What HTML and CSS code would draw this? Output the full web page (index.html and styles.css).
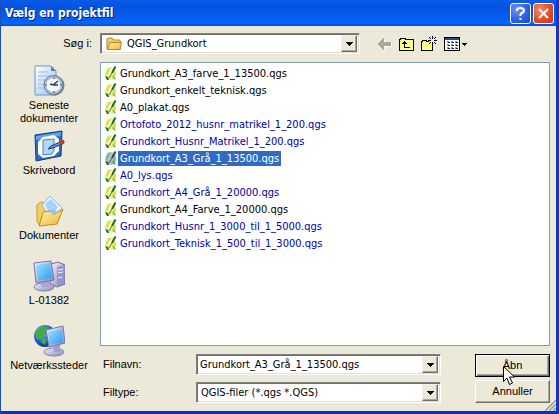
FILE: index.html
```html
<!DOCTYPE html>
<html lang="da">
<head>
<meta charset="utf-8">
<title>Vælg en projektfil</title>
<link rel="stylesheet" href="styles.css">
</head>
<body>
<svg class="defs" aria-hidden="true">
  <defs>
    <linearGradient id="paper" x1="0" y1="0" x2="1" y2="1"><stop offset="0" stop-color="#fff"/><stop offset="1" stop-color="#9cc0ee"/></linearGradient>
    <linearGradient id="screen" x1="0" y1="0" x2="1" y2="1"><stop offset="0" stop-color="#9fe4fd"/><stop offset="1" stop-color="#2a98f2"/></linearGradient>
    <linearGradient id="gold" x1="0" y1="0" x2="1" y2="1"><stop offset="0" stop-color="#fff3a6"/><stop offset="1" stop-color="#eeb83a"/></linearGradient>
    <linearGradient id="metal" x1="0" y1="0" x2="1" y2="1"><stop offset="0" stop-color="#f4f3fb"/><stop offset="1" stop-color="#8986b8"/></linearGradient>
    <radialGradient id="globe" cx=".35" cy=".3" r=".75"><stop offset="0" stop-color="#7cc4fa"/><stop offset=".6" stop-color="#1f5fc8"/><stop offset="1" stop-color="#0c2f82"/></radialGradient>
    <symbol id="qgs" viewBox="0 0 14 15">
      <path d="M3 2l3-1 5 1 1 4-1 6-3 2-5-1-2-5z" fill="#eef08c"/>
      <path d="M4 3l3-1-4 7-1-2zM11 5l1 3-1 4-3 1z" fill="#d3da4c"/>
      <path d="M6 4l3-1-3 5-2 1z" fill="#fbfbd8"/>
      <path d="M11.500 0.500L8 7" stroke="#1f6a34" stroke-width="2"/>
      <path d="M8 7l-3 5" stroke="#2e8a3c" stroke-width="1"/>
      <path d="M1 10l3 1 1 3-2 0z" fill="#1f6a34"/>
      <path d="M8 9l3 3 1 2-2-1z" fill="#7ca436"/>
    </symbol>
    <symbol id="down" viewBox="0 0 7 4"><path d="M0 0h7v1H6v1H5v1H4v1H3V3H2V2H1V1H0z"/></symbol>
  </defs>
</svg>

<main class="dialog">
  <header class="titlebar">
    <h1>Vælg en projektfil</h1>
    <button class="caption help" type="button" aria-label="Hjælp"><svg viewBox="0 0 19 19"><path d="M6 7V5.500Q6.500 4 9.500 4T13 6.500Q13 8 11 9T9.500 12M9.500 14v2" fill="none" stroke="#fff" stroke-width="2"/></svg></button>
    <button class="caption close" type="button" aria-label="Luk"><svg viewBox="0 0 19 19"><path d="M5 5l9 9M14 5l-9 9" fill="none" stroke="#fff" stroke-width="2"/></svg></button>
  </header>

  <form class="client">
    <label class="look-label" for="folder">Søg i:</label>
    <div class="lookbar">
      <div class="combo folder-combo">
        <svg class="folder" viewBox="0 0 16 14"><path d="M1 12V2.500Q1 1 2.500 1H6l1.500 2H13q1.500 0 1.500 1.500V12z" fill="#f3cf63" stroke="#b78a26"/><path d="M1.500 12.500L4 5.500h11.500L14 12.500z" fill="url(#gold)" stroke="#b8892a"/></svg>
        <select id="folder"><option>QGIS_Grundkort</option></select>
        <span class="drop" aria-hidden="true"><svg viewBox="0 0 7 4"><use href="#down"/></svg></span>
      </div>
      <div class="tools">
        <button type="button" aria-label="Tilbage" disabled><svg width="14" height="12" viewBox="0 0 14 12"><path d="M7 1v3h7v5H7v3L1 7z" fill="#fff"/><path d="M6 0v4h7v4H6v4H5v-1H4v-1H3V9H2V8H1V7H0V5h1V4h1V3h1V2h1V1h1V0z" fill="#aca899"/></svg></button>
        <button type="button" aria-label="Et niveau op"><svg width="15" height="14" viewBox="0 0 15 14" shape-rendering="crispEdges"><path d="M.5 13.500V2.500H1.500V1.500H6.500V2.500H14.500V13.500z" fill="#ffff83" stroke="#000"/><path d="M5 4h1v1h1v1h1v1H6v3h5v1H5V7H3V6h1V5h1z"/></svg></button>
        <button type="button" aria-label="Opret ny mappe"><svg width="16" height="16" viewBox="0 0 16 16" shape-rendering="crispEdges"><path d="M.5 14.500V5.500H1.500V4.500H5.500V5.500H11.500V14.500z" fill="#ffff83" stroke="#000"/><path d="M8 3h7v5H8z" fill="#ece9d8"/><path d="M11 0h1v3h-1zM11 6h1v3h-1zM7 4h3v1H7zM13 4h3v1h-3zM8 1h1v1H8zM9 2h1v1H9zM14 1h1v1h-1zM13 2h1v1h-1zM9 6h1v1H9zM8 7h1v1H8zM13 6h1v1h-1zM14 7h1v1h-1z"/></svg></button>
        <button type="button" aria-label="Visning"><svg width="23" height="14" viewBox="0 0 23 14" shape-rendering="crispEdges"><path d="M.5.5h15v13H.5z" fill="#fff" stroke="#000"/><path d="M1 1h14v2H1z" fill="#24479c"/><path d="M3 4h2v2H3zM7 4h2v2H7zM11 4h2v2h-2zM3 7h2v2H3zM7 7h2v2H7zM11 7h2v2h-2zM3 10h2v2H3zM7 10h2v2H7zM11 10h2v2h-2z" fill="#8890b8"/><path d="M4 5h2v1H4zM8 5h2v1H8zM12 5h2v1h-2zM4 8h2v1H4zM8 8h2v1H8zM12 8h2v1h-2zM4 11h2v1H4zM8 11h2v1H8zM12 11h2v1h-2z" fill="#101c50"/><path d="M18 6h5v1h-1v1h-1v1h-1V8h-1V7h-1z"/></svg></button>
      </div>
    </div>

    <nav class="places">
      <button type="button"><svg viewBox="0 0 32 32"><path d="M2 1h16l5 5v24H2z" fill="url(#paper)" stroke="#6d95cc"/><path d="M18 1v5h5z" fill="#4a85d8"/><path d="M5 7h10M5 11h13M5 15h8M5 19h6M5 23h6" stroke="#9db9e0"/><circle cx="21.500" cy="20.500" r="10" fill="#6b8091"/><circle cx="20.500" cy="20" r="9.500" fill="#a7c3d8" stroke="#587f9f"/><circle cx="20.500" cy="20" r="7" fill="#f4f9fd"/><path d="M20 20l5-4M20 20l-3-1M20 20h5" stroke="#243b53" stroke-width="1.500"/><path d="M20 12h2v2h-2zM20 26h2v2h-2zM12 19h2v2h-2zM27 19h2v2h-2z" fill="#e07548"/></svg><span>Seneste dokumenter</span></button>
      <button type="button"><svg viewBox="0 0 32 32"><path d="M2 5l27-4-1 25-25 5z" fill="#2a6cc4" stroke="#123d83"/><path d="M3 6l25-4-.5 4L3 10z" fill="#5fa4ee"/><path d="M10 7l11-2 5 4v12l-5 5-11 2-5-4V12z" fill="#fbfaec"/><path d="M10 10l11-1v11l-2 4-9 1z" fill="#b3d6f8" stroke="#4583c4"/><path d="M15 19l3-3 9-4 2 2-9 4z" fill="#5b9ade" stroke="#173b72"/><circle cx="29" cy="12" r="2.500" fill="#b9402f"/></svg><span>Skrivebord</span></button>
      <button type="button"><svg viewBox="0 0 32 32"><path d="M4 10l4-3 5 2 1 4 11 0-18 18-3-5z" fill="#f5cf60" stroke="#c69430"/><path d="M9 10L17 1l12 12-10 13z" fill="#e8f5ff" stroke="#8eb9e4"/><path d="M12 9l6-5 7 8-8 9z" fill="#a6d2fb"/><path d="M30 14l-6 15-18 2 4-14 8-1 3 3z" fill="url(#gold)" stroke="#bd892b"/><path d="M17 15h7l-4 6z" fill="#8dc5f3"/></svg><span>Dokumenter</span></button>
      <button type="button"><svg viewBox="0 0 32 32"><path d="M18 4l7-2 7 3v19l-8 3-7-3z" fill="url(#metal)" stroke="#706da5"/><path d="M24 7l7-2v18l-7 3z" fill="#9895c8"/><path d="M25 10l5-1M25 13l5-1M25 18l4-1" stroke="#f1f0ff"/><ellipse cx="11" cy="27" rx="10" ry="4" fill="url(#metal)" stroke="#8582b3"/><path d="M8 20h8l1 7H8z" fill="#aaa7d0"/><path d="M1 3l17-2 3 19-18 3z" fill="url(#metal)" stroke="#7472ae"/><path d="M3 5l14-2 2 15-14 3z" fill="url(#screen)"/></svg><span>L-01382</span></button>
      <button type="button"><svg viewBox="0 0 32 32"><circle cx="12" cy="11" r="11" fill="url(#globe)"/><path d="M3 6l7-5 6 2-2 5-4 2-1 5-5-1-2-4zM10 13l4 1-2 6-4-3z" fill="#48a843"/><ellipse cx="21" cy="27" rx="10" ry="4" fill="url(#metal)" stroke="#8582b3"/><path d="M20 19h7v8h-6z" fill="#a3a1c7"/><path d="M13 5l17-4 2 17-16 4z" fill="url(#metal)" stroke="#7775a8"/><path d="M15 7l14-3 1 13-13 3z" fill="url(#screen)"/></svg><span>Netværkssteder</span></button>
    </nav>

    <ul class="files">
      <li><svg><use href="#qgs"/></svg><span>Grundkort_A3_farve_1_13500.qgs</span></li>
      <li><svg><use href="#qgs"/></svg><span>Grundkort_enkelt_teknisk.qgs</span></li>
      <li><svg><use href="#qgs"/></svg><span>A0_plakat.qgs</span></li>
      <li class="packed"><svg><use href="#qgs"/></svg><span>Ortofoto_2012_husnr_matrikel_1_200.qgs</span></li>
      <li class="packed"><svg><use href="#qgs"/></svg><span>Grundkort_Husnr_Matrikel_1_200.qgs</span></li>
      <li class="selected"><svg><use href="#qgs"/></svg><span>Grundkort_A3_Grå_1_13500.qgs</span></li>
      <li class="packed"><svg><use href="#qgs"/></svg><span>A0_lys.qgs</span></li>
      <li class="packed"><svg><use href="#qgs"/></svg><span>Grundkort_A4_Grå_1_20000.qgs</span></li>
      <li><svg><use href="#qgs"/></svg><span>Grundkort_A4_Farve_1_20000.qgs</span></li>
      <li class="packed"><svg><use href="#qgs"/></svg><span>Grundkort_Husnr_1_3000_til_1_5000.qgs</span></li>
      <li class="packed"><svg><use href="#qgs"/></svg><span>Grundkort_Teknisk_1_500_til_1_3000.qgs</span></li>
    </ul>

    <div class="footer">
      <div class="fields">
        <label for="filename">Filnavn:</label>
        <div class="combo"><input id="filename" type="text" value="Grundkort_A3_Grå_1_13500.qgs"><button class="drop" type="button" aria-label="Vis filnavne"><svg viewBox="0 0 7 4"><use href="#down"/></svg></button></div>
        <label for="filetype">Filtype:</label>
        <div class="combo"><select id="filetype"><option>QGIS-filer (*.qgs *.QGS)</option></select><span class="drop" aria-hidden="true"><svg viewBox="0 0 7 4"><use href="#down"/></svg></span></div>
      </div>
      <div class="actions">
        <button class="push default" type="button">Åbn<svg class="cursor" viewBox="0 0 12 20" aria-hidden="true"><path d="M.5.5v15l3.500-3.500 2.500 6.500 3-1.500-3-6h5z" fill="#fff" stroke="#000"/></svg></button>
        <button class="push" type="button">Annuller</button>
      </div>
    </div>
    <svg class="grip" viewBox="0 0 12 12" aria-hidden="true"><path d="M0 12L12 0M4 12l8-8M8 12l4-4" stroke="#fff" stroke-width="2"/><path d="M1 12L12 1M5 12l7-7M9 12l3-3" stroke="#aca899" stroke-width="2"/></svg>
  </form>
</main>
</body>
</html>
```
FILE: styles.css
```css
* { box-sizing: border-box; }

body {
  margin: 0;
  color: #000;
  font: 11px/13px "Liberation Sans", Arial, sans-serif;
}

button, input, select {
  margin: 0;
  padding: 0;
  border: 0;
  border-radius: 0;
  background: none;
  color: inherit;
  font: inherit;
}

svg { display: block; flex: none; }
.defs { position: absolute; width: 0; height: 0; }

.dialog {
  display: flex;
  flex-direction: column;
  min-height: 100vh;
  border: solid #0831d9;
  border-color: #0f3fb5 #0a38d0 #0a30c8 #1c50b8;
  border-width: 0 3px 3px 1px;
  background: #ece9d8;
}

.titlebar {
  display: flex;
  align-items: center;
  gap: 2px;
  height: 26px;
  padding: 0 2px 0 4px;
  background: linear-gradient(#0a5be8, #0453e0 30%, #0560f5 75%, #0466fb 90%, #0048d0);
}

.titlebar h1 {
  flex: 1;
  margin: 0;
  color: #fff;
  font: bold 12px/16px "DejaVu Sans Condensed", "DejaVu Sans", sans-serif;
  text-shadow: 1px 1px #0a1883;
}

.caption {
  width: 21px;
  height: 21px;
  border: 1px solid #fff;
  border-radius: 3px;
}
.caption svg { width: 19px; height: 19px; }
.help { background: radial-gradient(circle at 30% 30%, #6f97f4, #2a5ce4 60%, #1a48cc); }
.close { background: radial-gradient(circle at 30% 30%, #ef8a68, #dc4a22 60%, #c03a14); }

.client {
  position: relative;
  display: grid;
  grid-template: 21px 1fr 49px / 91px 1fr;
  gap: 8px;
  flex: 1;
  padding: 7px 6px 8px 0;
}

.look-label { align-self: center; text-align: right; }

.lookbar { display: flex; align-items: center; }

.combo {
  display: flex;
  align-items: center;
  height: 21px;
  border: 1px solid;
  border-color: #808080 #fff #fff #808080;
  background: #fff;
  box-shadow: inset 1px 1px #716f64, inset -1px -1px #e3dfcc;
  padding: 2px;
  font-family: "DejaVu Sans Condensed", "DejaVu Sans", sans-serif;
}
.combo input, .combo select {
  flex: 1;
  min-width: 0;
  height: 17px;
  padding: 0 1px;
  appearance: none;
  outline: 0;
}
.combo select { padding: 0 2px; }
.folder-combo { flex: 0 1 260px; }
.folder { width: 16px; height: 14px; margin: 0 3px; }

.drop {
  display: grid;
  place-items: center;
  width: 16px;
  height: 17px;
  border: 1px solid;
  border-color: #f4f2e8 #716f64 #716f64 #f4f2e8;
  background: #ece9d8;
  box-shadow: inset -1px -1px #aca899;
}
.drop svg { width: 7px; height: 4px; }

.tools {
  display: flex;
  align-items: center;
  gap: 7px;
  margin-left: 18px;
}

.places {
  display: flex;
  flex-direction: column;
  grid-row: 2 / 4;
  gap: 5px;
  padding: 3px 0 0 5px;
}
.places button {
  display: flex;
  flex-direction: column;
  align-items: center;
  gap: 2px;
  min-height: 60px;
}
.places svg { width: 32px; height: 32px; }

.files {
  margin: 0;
  padding: 2px 3px;
  border: 1px solid #7f9db9;
  background: #fff;
  font-family: "DejaVu Sans Condensed", "DejaVu Sans", sans-serif;
  list-style: none;
}
.files li { display: flex; align-items: center; height: 17px; }
.files svg { width: 14px; height: 15px; }
.files span { padding: 1px 2px; }
.packed { color: #00a; }
.selected span { background: #316ac5; color: #fff; }
.selected svg { filter: grayscale(.6) hue-rotate(80deg) brightness(.8); }

.footer {
  grid-column: 2;
  display: flex;
  gap: 34px;
}
.fields {
  display: grid;
  grid-template-columns: 96px 1fr;
  row-gap: 7px;
  align-content: start;
  align-items: center;
  flex: 1;
}
.fields label { padding-left: 3px; }

.actions { display: grid; gap: 3px; width: 75px; }
.push {
  position: relative;
  height: 23px;
  border: 1px solid;
  border-color: #fff #716f64 #716f64 #fff;
  background: #ece9d8;
  box-shadow: inset -1px -1px #aca899;
}
.default {
  border-color: #000;
  box-shadow: inset 1px 1px #fff, inset -1px -1px #716f64, inset -2px -2px #aca899;
}
.cursor {
  position: absolute;
  z-index: 1;
  top: 11px;
  left: 27px;
  width: 12px;
  height: 20px;
}
.grip {
  position: absolute;
  right: 0;
  bottom: 0;
  width: 12px;
  height: 12px;
}
```
